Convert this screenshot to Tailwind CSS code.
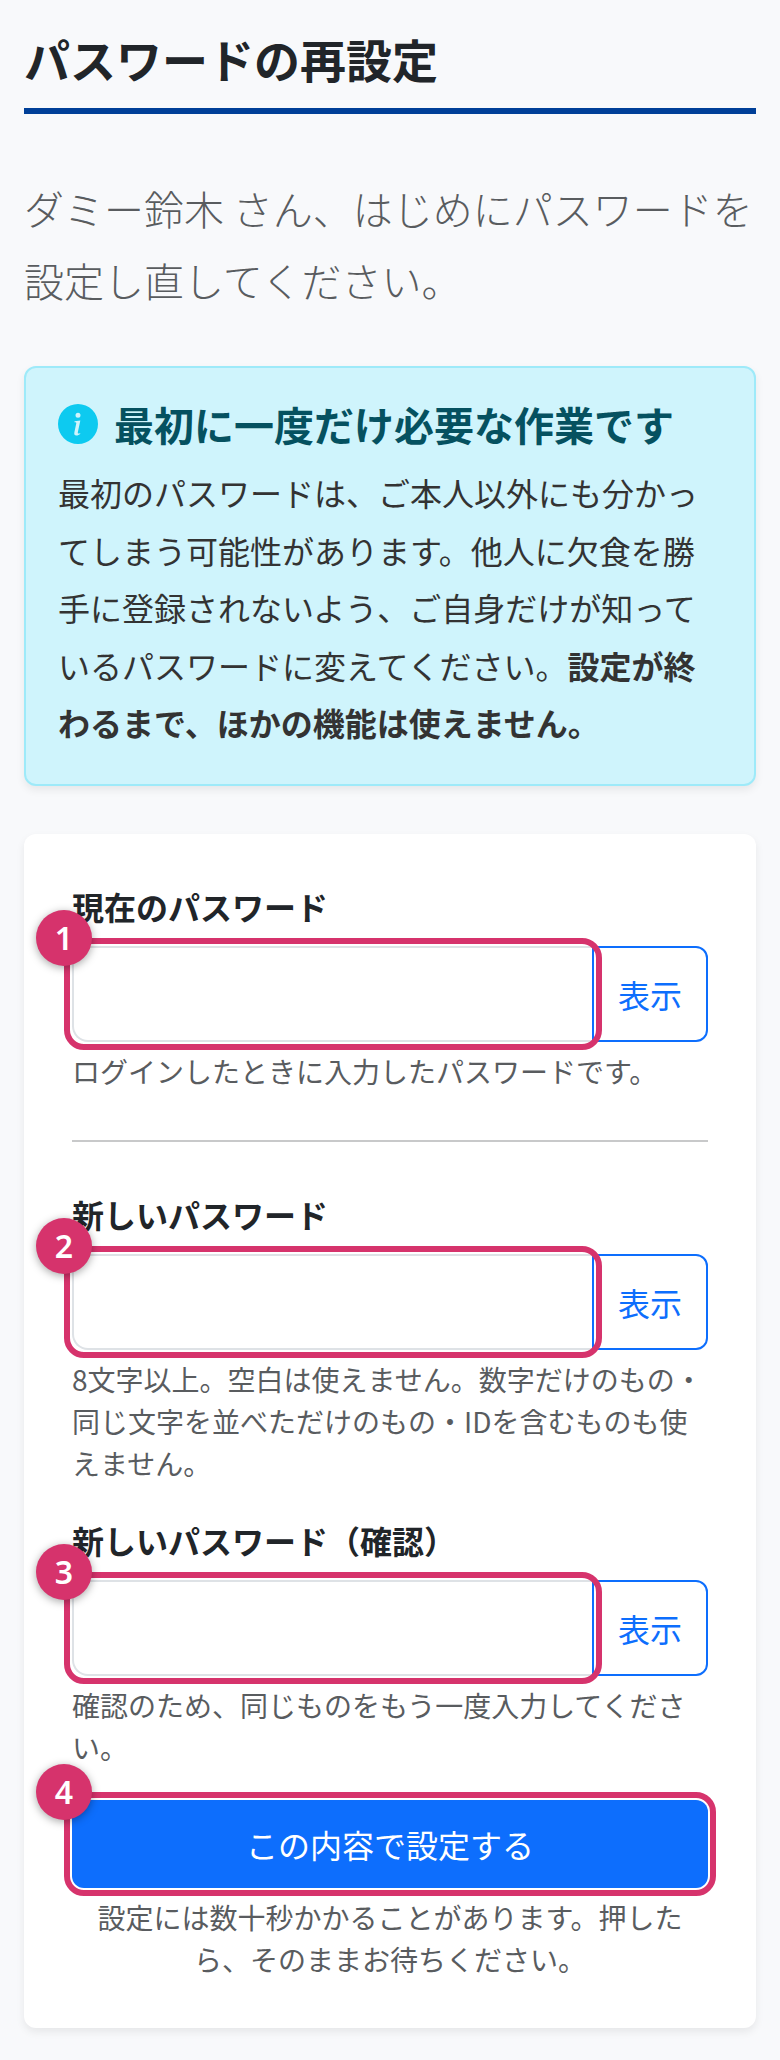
<!DOCTYPE html>
<html lang="ja">
<head>
<meta charset="utf-8">
<meta name="viewport" content="width=device-width, initial-scale=1">
<title>パスワードの再設定</title>
<script src="https://cdn.jsdelivr.net/npm/@tailwindcss/browser@4"></script>
</head>
<body class="bg-[#f8f9fb] text-[#212529] text-[32px] leading-normal font-['Noto_Sans_CJK_JP',sans-serif]">
<main class="px-6 pt-6 pb-8">
  <h1 class="border-b-6 border-[#003f98] pb-4 text-[46px] leading-[68px] font-bold">パスワードの再設定</h1>
  <p class="mt-[58px] text-[40px] leading-[72px] font-light text-[#595c5f]">ダミー鈴木 さん、はじめにパスワードを設定し直してください。</p>

  <section class="mt-[50px] rounded-xl border-2 border-[#9eeaf9] bg-[#cff4fc] p-8 shadow-[0_4px_8px_rgba(0,0,0,0.075)]">
    <div class="mb-4 flex items-center gap-4">
      <svg class="size-10 shrink-0 fill-[#0dcaf0]" viewBox="0 0 16 16" aria-hidden="true"><path d="M8 16A8 8 0 1 0 8 0a8 8 0 0 0 0 16m.93-9.412-1 4.705c-.07.34.029.533.304.533.194 0 .487-.07.686-.246l-.088.416c-.287.346-.92.598-1.465.598-.703 0-1.002-.422-.808-1.319l.738-3.468c.064-.293.006-.399-.287-.47l-.451-.081.082-.381 2.29-.287zM8 5.5a1 1 0 1 1 0-2 1 1 0 0 1 0 2"/></svg>
      <h2 class="text-[40px] leading-12 font-bold text-[#055160]">最初に一度だけ必要な作業です</h2>
    </div>
    <p class="leading-[1.8] text-[#333333]">最初のパスワードは、ご本人以外にも分かってしまう可能性があります。他人に欠食を勝手に登録されないよう、ご自身だけが知っているパスワードに変えてください。<strong class="font-bold">設定が終わるまで、ほかの機能は使えません。</strong></p>
  </section>

  <form class="mt-12 rounded-xl bg-white p-12 shadow-[0_4px_8px_rgba(0,0,0,0.075)]">
    <div>
      <label for="current" class="mb-4 block leading-12 font-bold">現在のパスワード</label>
      <div class="flex">
        <div class="relative z-10 min-w-0 flex-1">
          <input id="current" type="password" aria-describedby="current-help" class="block h-24 w-full rounded-l-2xl border-2 border-r-0 border-[#dee2e6] bg-white px-8">
          <span class="pointer-events-none absolute -top-2 -right-2.5 -bottom-2 -left-2 rounded-[20px] border-6 border-[#d6336c]"></span>
          <span class="absolute -top-9 -left-9 flex size-14 items-center justify-center rounded-full bg-[#d6336c] font-['Noto_Sans',sans-serif] text-[32px] leading-none font-semibold text-white shadow-[0_2px_8px_rgba(0,0,0,0.35)]">1</span>
        </div>
        <button type="button" class="h-24 rounded-r-xl border-2 border-[#0d6efd] px-6 text-[#0d6efd]">表示</button>
      </div>
      <p id="current-help" class="mt-2 text-[28px] leading-[42px] text-[#595c5f]">ログインしたときに入力したパスワードです。</p>
    </div>

    <hr class="my-12 border-t-2 border-[#c8c9ca]">

    <div>
      <label for="new" class="mb-4 block leading-12 font-bold">新しいパスワード</label>
      <div class="flex">
        <div class="relative z-10 min-w-0 flex-1">
          <input id="new" type="password" aria-describedby="new-help" class="block h-24 w-full rounded-l-2xl border-2 border-r-0 border-[#dee2e6] bg-white px-8">
          <span class="pointer-events-none absolute -top-2 -right-2.5 -bottom-2 -left-2 rounded-[20px] border-6 border-[#d6336c]"></span>
          <span class="absolute -top-9 -left-9 flex size-14 items-center justify-center rounded-full bg-[#d6336c] font-['Noto_Sans',sans-serif] text-[32px] leading-none font-semibold text-white shadow-[0_2px_8px_rgba(0,0,0,0.35)]">2</span>
        </div>
        <button type="button" class="h-24 rounded-r-xl border-2 border-[#0d6efd] px-6 text-[#0d6efd]">表示</button>
      </div>
      <p id="new-help" class="mt-2 text-[28px] leading-[42px] text-[#595c5f]">8文字以上。空白は使えません。数字だけのもの・同じ文字を並べただけのもの・IDを含むものも使えません。</p>
    </div>

    <div class="mt-8">
      <label for="confirm" class="mb-4 block leading-12 font-bold">新しいパスワード（確認）</label>
      <div class="flex">
        <div class="relative z-10 min-w-0 flex-1">
          <input id="confirm" type="password" aria-describedby="confirm-help" class="block h-24 w-full rounded-l-2xl border-2 border-r-0 border-[#dee2e6] bg-white px-8">
          <span class="pointer-events-none absolute -top-2 -right-2.5 -bottom-2 -left-2 rounded-[20px] border-6 border-[#d6336c]"></span>
          <span class="absolute -top-9 -left-9 flex size-14 items-center justify-center rounded-full bg-[#d6336c] font-['Noto_Sans',sans-serif] text-[32px] leading-none font-semibold text-white shadow-[0_2px_8px_rgba(0,0,0,0.35)]">3</span>
        </div>
        <button type="button" class="h-24 rounded-r-xl border-2 border-[#0d6efd] px-6 text-[#0d6efd]">表示</button>
      </div>
      <p id="confirm-help" class="mt-2 text-[28px] leading-[42px] text-[#595c5f]">確認のため、同じものをもう一度入力してください。</p>
    </div>

    <div class="relative mt-8">
      <button type="submit" aria-describedby="submit-help" class="block h-22 w-full rounded-xl bg-[#0d6efd] text-white">この内容で設定する</button>
      <span class="pointer-events-none absolute -inset-2 rounded-[20px] border-6 border-[#d6336c]"></span>
      <span class="absolute -top-9 -left-9 flex size-14 items-center justify-center rounded-full bg-[#d6336c] font-['Noto_Sans',sans-serif] text-[32px] leading-none font-semibold text-white shadow-[0_2px_8px_rgba(0,0,0,0.35)]">4</span>
    </div>
    <p id="submit-help" class="mt-2 text-center text-[28px] leading-[42px] text-[#595c5f]">設定には数十秒かかることがあります。押したら、そのままお待ちください。</p>
  </form>
</main>
</body>
</html>
